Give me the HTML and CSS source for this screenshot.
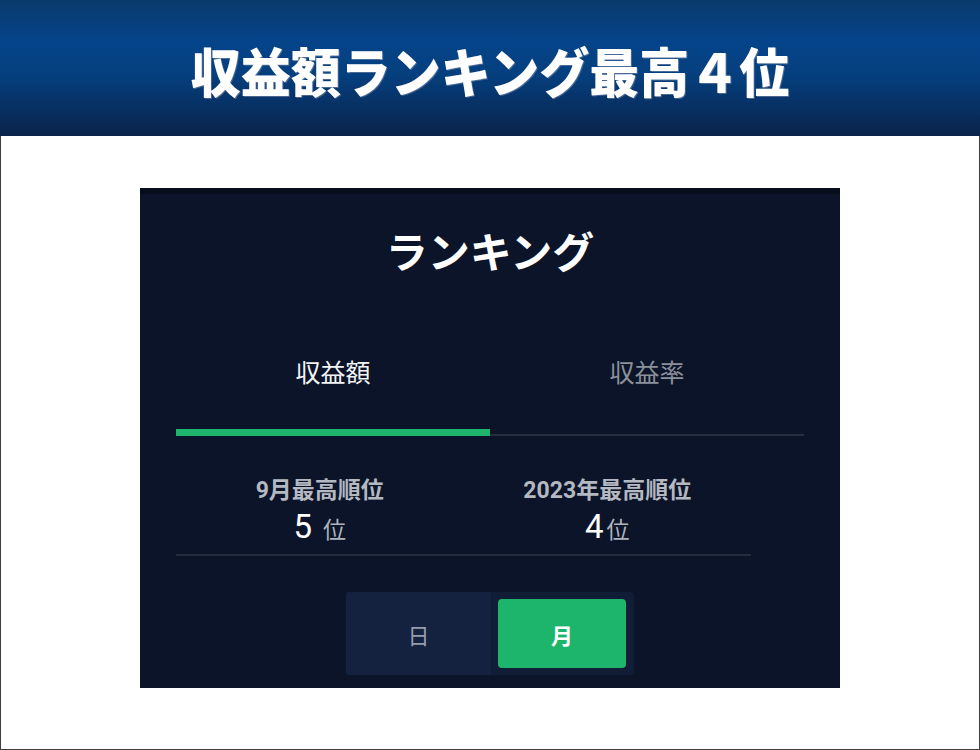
FILE: index.html
```html
<!DOCTYPE html>
<html lang="ja">
<head>
<meta charset="utf-8">
<link rel="stylesheet" href="styles.css">
</head>
<body>
<div class="page">
  <header class="banner">
    <h1 class="banner-title">収益額ランキング最高４位</h1>
  </header>
  <main class="content">
    <section class="panel">
      <div class="strip"></div>
      <h2 class="panel-title">ランキング</h2>
      <div class="tabs">
        <div class="tab active">
          <div class="tab-label">収益額</div>
          <div class="tab-bar"></div>
        </div>
        <div class="tab">
          <div class="tab-label">収益率</div>
          <div class="tab-bar"></div>
        </div>
      </div>
      <div class="stats">
        <div class="stat">
          <div class="stat-label">9月最高順位</div>
          <div class="stat-value"><span class="num">5</span><span class="unit spaced">位</span></div>
        </div>
        <div class="stat">
          <div class="stat-label">2023年最高順位</div>
          <div class="stat-value"><span class="num">4</span><span class="unit">位</span></div>
        </div>
      </div>
      <div class="toggle-wrap">
        <div class="toggle">
          <div class="seg">日</div>
          <div class="seg seg-active">月</div>
        </div>
      </div>
    </section>
  </main>
</div>
</body>
</html>
```
FILE: styles.css
```css
* { box-sizing: border-box; }
html, body { margin: 0; padding: 0; }
body {
  width: 980px;
  height: 750px;
  font-family: "Noto Sans CJK JP", "Noto Sans", sans-serif;
  background: #ffffff;
}
.page {
  width: 980px;
  height: 750px;
  border: 1px solid #3f3f3f;
  border-top: none;
  display: flex;
  flex-direction: column;
}
.banner {
  height: 136px;
  margin: 0 -1px;
  background: linear-gradient(to bottom, #0a3a6c 0%, #05448a 30%, #053f7e 55%, #082c5c 85%, #0b2349 100%);
  display: flex;
  align-items: center;
  justify-content: center;
}
.banner-title {
  margin: 0;
  color: #ffffff;
  font-size: 50px;
  font-weight: 900;
  line-height: 1;
  letter-spacing: 0;
  padding-top: 2px;
  transform: scaleY(1.07);
  text-shadow: 1px 1px 0 rgba(140, 150, 175, 0.5);
}
.content {
  flex: 1;
  display: flex;
  justify-content: center;
  padding-top: 52px;
}
.panel {
  width: 700px;
  height: 500px;
  background: #0b1428;
  padding: 0 36px;
  display: flex;
  flex-direction: column;
}
.strip {
  height: 6px;
  margin: 0 -36px;
  background: #070d1b;
}
.panel-title {
  margin: 0;
  height: 112px;
  line-height: 112px;
  text-align: center;
  color: #ffffff;
  font-size: 42px;
  font-weight: 700;
}
.tabs {
  display: flex;
}
.tab {
  flex: 1;
  height: 130px;
  display: flex;
  flex-direction: column;
}
.tab-label {
  flex: 1;
  display: flex;
  align-items: center;
  justify-content: center;
  padding-top: 6px;
  font-size: 25px;
  color: #8b909b;
}
.tab-bar {
  height: 2px;
  margin-top: 5px;
  background: #262e40;
}
.tab.active .tab-label { color: #f2f3f5; }
.tab.active .tab-bar {
  height: 7px;
  margin-top: 0;
  background: #1fb56c;
}
.stats {
  display: flex;
  margin-right: 53px;
  margin-top: 41px;
  padding-bottom: 9px;
  border-bottom: 2px solid #242c3d;
}
.stat {
  flex: 1;
  text-align: center;
}
.stat-label {
  font-family: Roboto, "Noto Sans CJK JP", sans-serif;
  font-size: 23px;
  font-weight: 700;
  line-height: 28px;
  color: #b4b8c1;
}
.stat-value {
  margin-top: 4px;
  line-height: 36px;
  height: 36px;
}
.num {
  font-family: Roboto, "Noto Sans", sans-serif;
  font-size: 33px;
  color: #ffffff;
}
.unit {
  font-size: 23px;
  color: #aeb3bd;
  margin-left: 3px;
}
.unit.spaced { margin-left: 11px; }
.toggle-wrap {
  display: flex;
  justify-content: center;
  margin-top: 36px;
}
.toggle {
  width: 288px;
  height: 83px;
  background: #111c36;
  border-radius: 3px;
  display: flex;
  gap: 7px;
  padding: 7px 8px 7px 0;
}
.seg {
  width: 145px;
  margin: -7px 0;
  background: #15223f;
  border-radius: 3px 0 0 3px;
  display: flex;
  align-items: center;
  justify-content: center;
  font-size: 22px;
  color: #959cab;
}
.seg-active {
  width: 128px;
  margin: 0;
  background: #1db56c;
  border-radius: 4px;
  color: #ffffff;
  font-weight: 700;
}
```
